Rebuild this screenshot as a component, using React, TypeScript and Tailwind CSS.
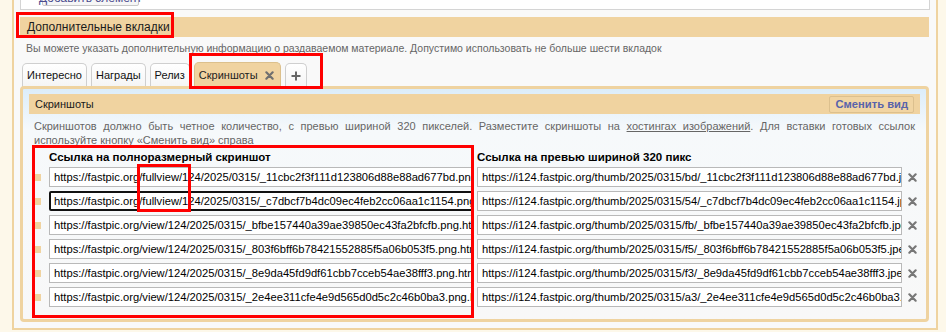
import React from "react";

const leftUrls = [
  "https://fastpic.org/fullview/124/2025/0315/_11cbc2f3f111d123806d88e88ad677bd.png",
  "https://fastpic.org/fullview/124/2025/0315/_c7dbcf7b4dc09ec4feb2cc06aa1c1154.png",
  "https://fastpic.org/view/124/2025/0315/_bfbe157440a39ae39850ec43fa2bfcfb.png.html",
  "https://fastpic.org/view/124/2025/0315/_803f6bff6b78421552885f5a06b053f5.png.html",
  "https://fastpic.org/view/124/2025/0315/_8e9da45fd9df61cbb7cceb54ae38fff3.png.html",
  "https://fastpic.org/view/124/2025/0315/_2e4ee311cfe4e9d565d0d5c2c46b0ba3.png.html",
];

const rightUrls = [
  "https://i124.fastpic.org/thumb/2025/0315/bd/_11cbc2f3f111d123806d88e88ad677bd.jpeg",
  "https://i124.fastpic.org/thumb/2025/0315/54/_c7dbcf7b4dc09ec4feb2cc06aa1c1154.jpeg",
  "https://i124.fastpic.org/thumb/2025/0315/fb/_bfbe157440a39ae39850ec43fa2bfcfb.jpeg",
  "https://i124.fastpic.org/thumb/2025/0315/f5/_803f6bff6b78421552885f5a06b053f5.jpeg",
  "https://i124.fastpic.org/thumb/2025/0315/f3/_8e9da45fd9df61cbb7cceb54ae38fff3.jpeg",
  "https://i124.fastpic.org/thumb/2025/0315/a3/_2e4ee311cfe4e9d565d0d5c2c46b0ba3.jpeg",
];

function XIcon({ size = 9, color = "#7a7a7a" }: { size?: number; color?: string }) {
  return (
    <svg width={size} height={size} viewBox="0 0 10 10">
      <path d="M1.5 1.5 L8.5 8.5 M8.5 1.5 L1.5 8.5" stroke={color} strokeWidth="2.4" strokeLinecap="round" />
    </svg>
  );
}

function Tab({ label, active }: { label: string; active?: boolean }) {
  return (
    <div
      className={
        active
          ? "flex h-[26px] items-center gap-[7px] rounded-t-[5px] border border-b-0 border-[#dcc08c] bg-[#f0d3a0] pl-[4px] pr-[6px] pb-[1px] text-[11px] text-[#222]"
          : "flex h-[25px] items-center rounded-t-[5px] border border-b-0 border-[#cfcfcf] bg-gradient-to-b from-white to-[#f4f4f4] px-[4px] pb-[1px] text-[11px] text-[#111]"
      }
    >
      <span>{label}</span>
      {active && <XIcon size={9} color="#6f6f6f" />}
    </div>
  );
}

function Field({ value, focused, width }: { value: string; focused?: boolean; width: string }) {
  return (
    <div
      className={
        (focused
          ? "rounded-[2px] border-2 border-[#111] pl-[3px] "
          : "border border-[#b9b9b9] pl-[4px] ") +
        width +
        " flex h-[20px] items-center overflow-hidden whitespace-nowrap bg-white text-[11.2px] text-black"
      }
    >
      <span>{value}</span>
      {focused && <span className="ml-[1px] h-[13px] w-[1px] shrink-0 bg-black" />}
    </div>
  );
}

export default function App() {
  return (
    <div className="relative h-[332px] w-[946px] overflow-hidden bg-[#fdf8ea] font-['Liberation_Sans',Arial,sans-serif]">
      <div className="ml-[12px] h-[330px] w-[926px] border-x-2 border-b-2 border-[#efd3a0] bg-[#f9f9f9] px-[6px]">
        {/* top fieldset remnant */}
        <div className="h-[10px] w-[910px] overflow-hidden border-x border-b border-[#d4d4d4] bg-white">
          <div className="ml-[21px] mt-[-10px] flex h-[16px] w-[97px] items-center justify-center whitespace-nowrap rounded-[2px] border border-[#c8c8c8] bg-[#f6f6f6] text-[12px] text-[#4b4b8f]">
            Добавить элемент
          </div>
        </div>

        {/* section bar */}
        <div className="mt-[7px] flex h-[20px] w-[909px] items-center bg-[#f0d3a0] pl-[7px] text-[12px] text-[#1a1a1a]">
          Дополнительные вкладки
        </div>

        <div className="mt-[4px] pl-[6px] text-[10.5px] leading-[14px] text-[#666]">
          Вы можете указать дополнительную информацию о раздаваемом материале. Допустимо использовать не больше шести вкладок
        </div>

        {/* tabs */}
        <div className="relative z-10 mt-[7px] flex items-end gap-[4px] pl-[2px]">
          <Tab label="Интересно" />
          <Tab label="Награды" />
          <Tab label="Релиз" />
          <Tab label="Скриншоты" active />
          <div className="flex h-[25px] w-[22px] items-center justify-center rounded-t-[5px] border border-b-0 border-[#cfcfcf] bg-gradient-to-b from-white to-[#f4f4f4] pb-[1px]">
            <svg width="10" height="10" viewBox="0 0 10 10">
              <path d="M5 0.5 V9.5 M0.5 5 H9.5" stroke="#666" strokeWidth="2" />
            </svg>
          </div>
        </div>

        {/* tab panel */}
        <div className="relative z-20 mt-[-2px] h-[236px] w-[909px] rounded-[4px] border-[3px] border-[#efd3a0] bg-gradient-to-b from-[#dcedfa] via-[#f6f9fb] via-[18%] to-[#f8f8f8] px-[6px] pt-[5px]">
          <div className="flex h-[20px] items-center justify-between bg-[#f0d3a0] pl-[6px] pr-[6px]">
            <span className="text-[11px] text-[#1a1a1a]">Скриншоты</span>
            <div className="flex h-[17px] items-center rounded-[2px] border border-[#dcc08e] bg-[#f1d5a3] px-[5px] text-[11.2px] font-bold text-[#5863ab]">
              Сменить вид
            </div>
          </div>

          <div className="mt-[5px] px-[5px] text-[11px] leading-[14px] text-[#666]">
            <div className="text-justify [text-align-last:justify]">
              Скриншотов должно быть четное количество, с превью шириной 320 пикселей. Разместите скриншоты на{" "}
              <span className="underline">хостингах изображений</span>. Для вставки готовых ссылок
            </div>
            <div>используйте кнопку «Сменить вид» справа</div>
          </div>

          <div className="mt-[3px] flex pl-[20px] text-[11.5px] font-bold leading-[14px] text-black">
            <div className="w-[428px]">Ссылка на полноразмерный скриншот</div>
            <div>Ссылка на превью шириной 320 пикс</div>
          </div>

          <div className="mt-[3px] flex flex-col gap-[4px]">
            {leftUrls.map((u, i) => (
              <div key={i} className="flex items-center">
                <div className="ml-[6px] h-[7px] w-[6px] bg-[#f0d3a0]" />
                <div className="ml-[8px]">
                  <Field value={u} focused={i === 1} width="w-[424px]" />
                </div>
                <div className="ml-[4px]">
                  <Field value={rightUrls[i]} width="w-[425px]" />
                </div>
                <div className="ml-[5px] flex w-[10px] justify-center">
                  <XIcon size={9} color="#777" />
                </div>
              </div>
            ))}
          </div>
        </div>
      </div>

      {/* red annotation boxes */}
      <div className="pointer-events-none absolute left-[16px] top-[12px] z-30 h-[26px] w-[158px] border-[3px] border-[#ff0000]" />
      <div className="pointer-events-none absolute left-[189px] top-[53px] z-30 h-[36px] w-[134px] border-[3px] border-[#ff0000]" />
      <div className="pointer-events-none absolute left-[32px] top-[145px] z-30 h-[173px] w-[442px] border-[3px] border-[#ff0000]" />
      <div className="pointer-events-none absolute left-[137px] top-[164px] z-30 h-[48px] w-[54px] border-[3px] border-[#ff0000]" />
    </div>
  );
}
